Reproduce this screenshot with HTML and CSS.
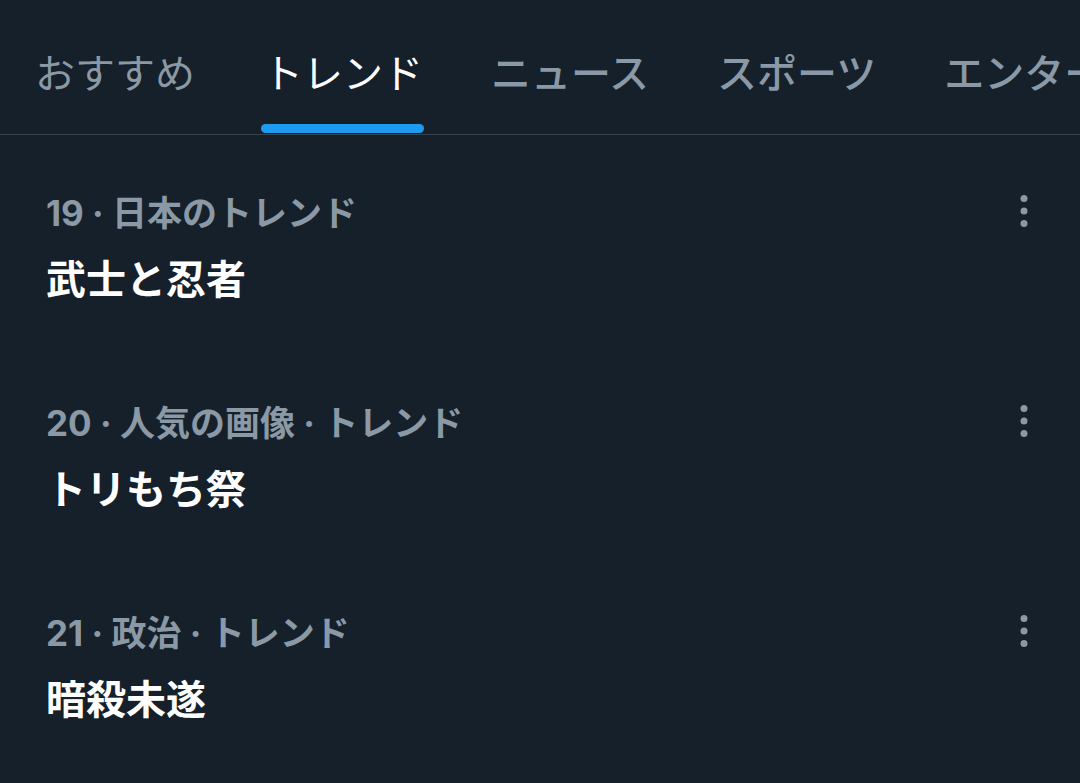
FILE: index.html
```html
<!DOCTYPE html>
<html lang="ja">
<head>
<meta charset="utf-8">
<link rel="stylesheet" href="styles.css">
</head>
<body>
<div class="app">
  <nav class="tabs">
    <div class="tab">おすすめ</div>
    <div class="tab active">トレンド<span class="bar"></span></div>
    <div class="tab bold">ニュース</div>
    <div class="tab bold">スポーツ</div>
    <div class="tab bold">エンターテイメント</div>
  </nav>
  <ul class="trends">
    <li class="trend">
      <div class="text">
        <div class="meta">19 · 日本のトレンド</div>
        <div class="title">武士と忍者</div>
      </div>
      <svg class="more" viewBox="0 0 10 32" width="10" height="32"><circle cx="5" cy="3.5" r="3.5"/><circle cx="5" cy="16" r="3.5"/><circle cx="5" cy="28.5" r="3.5"/></svg>
    </li>
    <li class="trend">
      <div class="text">
        <div class="meta">20 · 人気の画像 · トレンド</div>
        <div class="title">トリもち祭</div>
      </div>
      <svg class="more" viewBox="0 0 10 32" width="10" height="32"><circle cx="5" cy="3.5" r="3.5"/><circle cx="5" cy="16" r="3.5"/><circle cx="5" cy="28.5" r="3.5"/></svg>
    </li>
    <li class="trend">
      <div class="text">
        <div class="meta">21 · 政治 · トレンド</div>
        <div class="title">暗殺未遂</div>
      </div>
      <svg class="more" viewBox="0 0 10 32" width="10" height="32"><circle cx="5" cy="3.5" r="3.5"/><circle cx="5" cy="16" r="3.5"/><circle cx="5" cy="28.5" r="3.5"/></svg>
    </li>
  </ul>
</div>
</body>
</html>
```
FILE: styles.css
```css
html, body {
  margin: 0;
  padding: 0;
  background: #15202b;
}
body {
  font-family: "Noto Sans CJK JP", "Noto Sans", sans-serif;
  width: 1080px;
  height: 783px;
  overflow: hidden;
}
.app {
  width: 1080px;
}
.tabs {
  display: flex;
  gap: 68px;
  padding-left: 35px;
  height: 134px;
  border-bottom: 1px solid #38444d;
  white-space: nowrap;
  overflow: hidden;
}
.tab {
  position: relative;
  font-size: 40px;
  line-height: 1;
  padding-top: 51px;
  color: #8b98a5;
  font-weight: 400;
  flex: none;
}
.tab.bold {
  font-weight: 500;
}
.tab.active {
  color: #ffffff;
}
.bar {
  position: absolute;
  left: -2px;
  right: -1px;
  bottom: 1px;
  height: 9px;
  border-radius: 5px;
  background: #1d9bf0;
}
.trends {
  list-style: none;
  margin: 0;
  padding: 0;
}
.trend {
  display: flex;
  justify-content: space-between;
  align-items: flex-start;
  height: 210px;
  padding: 0 46px;
  box-sizing: border-box;
  padding-top: 58px;
}
.meta {
  font-family: "Inter", "Noto Sans CJK JP", sans-serif;
  color: #8b98a5;
  font-size: 35px;
  font-weight: 700;
  line-height: 40px;
}
.title {
  color: #ffffff;
  font-size: 40px;
  font-weight: 700;
  line-height: 48px;
  margin-top: 20px;
}
.more {
  fill: #8b98a5;
  margin-top: 2px;
  margin-right: 5px;
}
```
